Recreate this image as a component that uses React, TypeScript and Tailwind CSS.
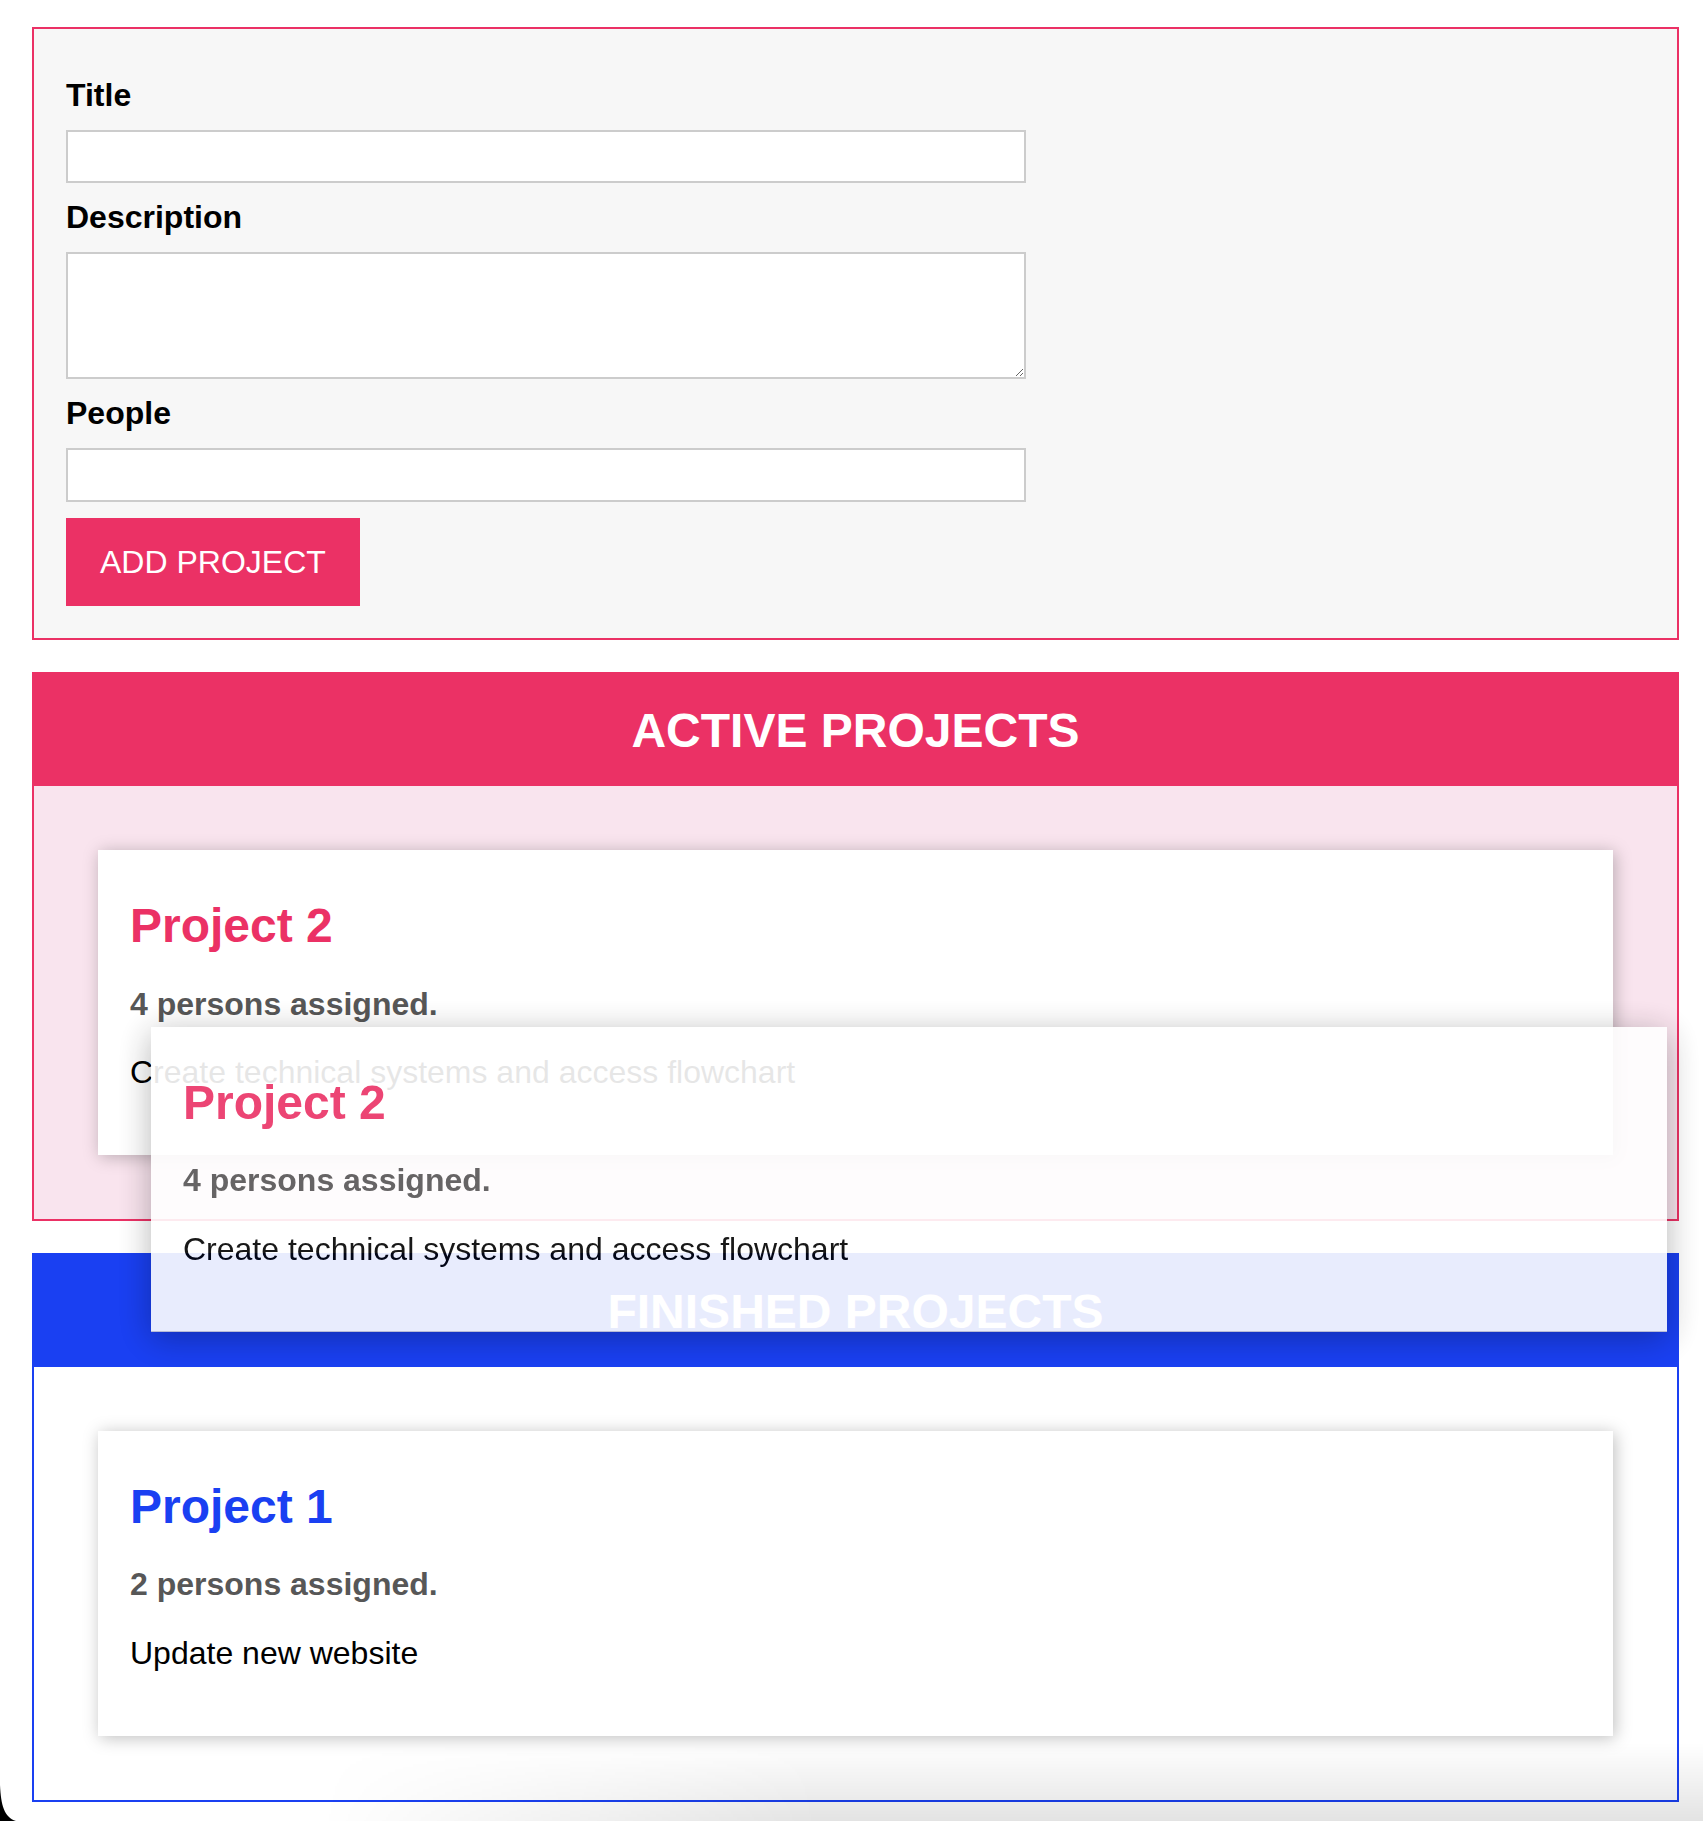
import React from 'react';

type Project = { id: string; title: string; people: number; description: string };

const active: Project[] = [
  { id: 'p2', title: 'Project 2', people: 4, description: 'Create technical systems and access flowchart' },
];
const finished: Project[] = [
  { id: 'p1', title: 'Project 1', people: 2, description: 'Update new website' },
];

const ProjectBody: React.FC<{ project: Project; titleColor: string }> = ({ project, titleColor }) => (
  <>
    <h2 className={`my-[16px] text-[48px] font-bold leading-[55.2px] ${titleColor}`}>{project.title}</h2>
    <h3 className="my-[32px] text-[32px] font-bold leading-[36.8px] text-[#575757]">
      {project.people} persons assigned.
    </h3>
    <p className="my-[32px] text-[32px] leading-[36.8px] text-black">{project.description}</p>
  </>
);

const ProjectList: React.FC<{ type: 'active' | 'finished'; projects: Project[] }> = ({ type, projects }) => {
  const isActive = type === 'active';
  return (
    <section
      className={`ml-[32px] mt-[32px] w-[1647px] border-2 ${isActive ? 'border-[#eb3165]' : 'border-[#1a40f2]'}`}
    >
      <header
        className={`flex h-[112px] items-center justify-center ${isActive ? 'bg-[#eb3165]' : 'bg-[#1a40f2]'}`}
      >
        <h2 className="text-[48px] font-bold leading-[55.2px] text-white">
          {isActive ? 'ACTIVE PROJECTS' : 'FINISHED PROJECTS'}
        </h2>
      </header>
      <ul className={`list-none p-[32px] ${isActive ? 'bg-[#f9e4ee]' : 'bg-white'}`}>
        {projects.map((p) => (
          <li key={p.id} className="m-[32px] bg-white p-[32px] shadow-[2px_2px_16px_rgba(0,0,0,0.26)]">
            <ProjectBody project={p} titleColor={isActive ? 'text-[#eb3165]' : 'text-[#1a40f2]'} />
          </li>
        ))}
      </ul>
    </section>
  );
};

export default function App() {
  return (
    <div className="relative h-[1821px] w-[1703px] overflow-hidden bg-white pt-[27px] font-['Liberation_Sans',Arial,sans-serif]">
      {/* New project form */}
      <div className="ml-[32px] w-[1647px] border-2 border-[#eb3165] bg-[#f7f7f7]">
        <form className="p-[32px]" onSubmit={(e) => e.preventDefault()}>
          <label htmlFor="title" className="my-[16px] block text-[32px] font-bold leading-[36.8px] text-black">
            Title
          </label>
          <input
            id="title"
            type="text"
            className="my-[16px] block w-full max-w-[960px] border-2 border-[#cccccc] bg-white px-[12.8px] py-[6.4px] text-[32px] leading-[36.8px] outline-none"
          />
          <label htmlFor="description" className="my-[16px] block text-[32px] font-bold leading-[36.8px] text-black">
            Description
          </label>
          <textarea
            id="description"
            rows={3}
            className="my-[16px] block h-[127px] w-full max-w-[960px] resize border-2 border-[#cccccc] bg-white px-[12.8px] py-[6.4px] text-[32px] leading-[36.8px] outline-none"
          />
          <label htmlFor="people" className="my-[16px] block text-[32px] font-bold leading-[36.8px] text-black">
            People
          </label>
          <input
            id="people"
            type="number"
            className="my-[16px] block w-full max-w-[960px] border-2 border-[#cccccc] bg-white px-[12.8px] py-[6.4px] text-[32px] leading-[36.8px] outline-none"
          />
          <button
            type="submit"
            className="block cursor-pointer border-2 border-[#eb3165] bg-[#eb3165] px-[32px] py-[24px] text-[32px] leading-[36.8px] text-white"
          >
            ADD PROJECT
          </button>
        </form>
      </div>

      <ProjectList type="active" projects={active} />
      <ProjectList type="finished" projects={finished} />

      {/* drag ghost of Project 2 */}
      <div className="pointer-events-none absolute left-[151px] top-[1027px] h-[305px] w-[1516px] border-b border-[#c9c9d2] bg-white p-[32px] opacity-90 shadow-[0_6px_32px_rgba(0,0,0,0.32)]">
        <ProjectBody project={active[0]} titleColor="text-[#eb3165]" />
      </div>

      {/* window shadow along the bottom */}
      <div className="pointer-events-none absolute bottom-0 left-0 h-[78px] w-full bg-[linear-gradient(to_bottom,rgba(0,0,0,0),rgba(0,0,0,0.11))] [mask-image:linear-gradient(to_right,transparent_320px,black_820px)]" />

      {/* window corner */}
      <svg className="absolute bottom-0 left-0" width="16" height="36" viewBox="0 0 16 36">
        <path d="M0 0 C1 20 4 32 16 36 L0 36 Z" fill="#000" />
      </svg>
    </div>
  );
}
